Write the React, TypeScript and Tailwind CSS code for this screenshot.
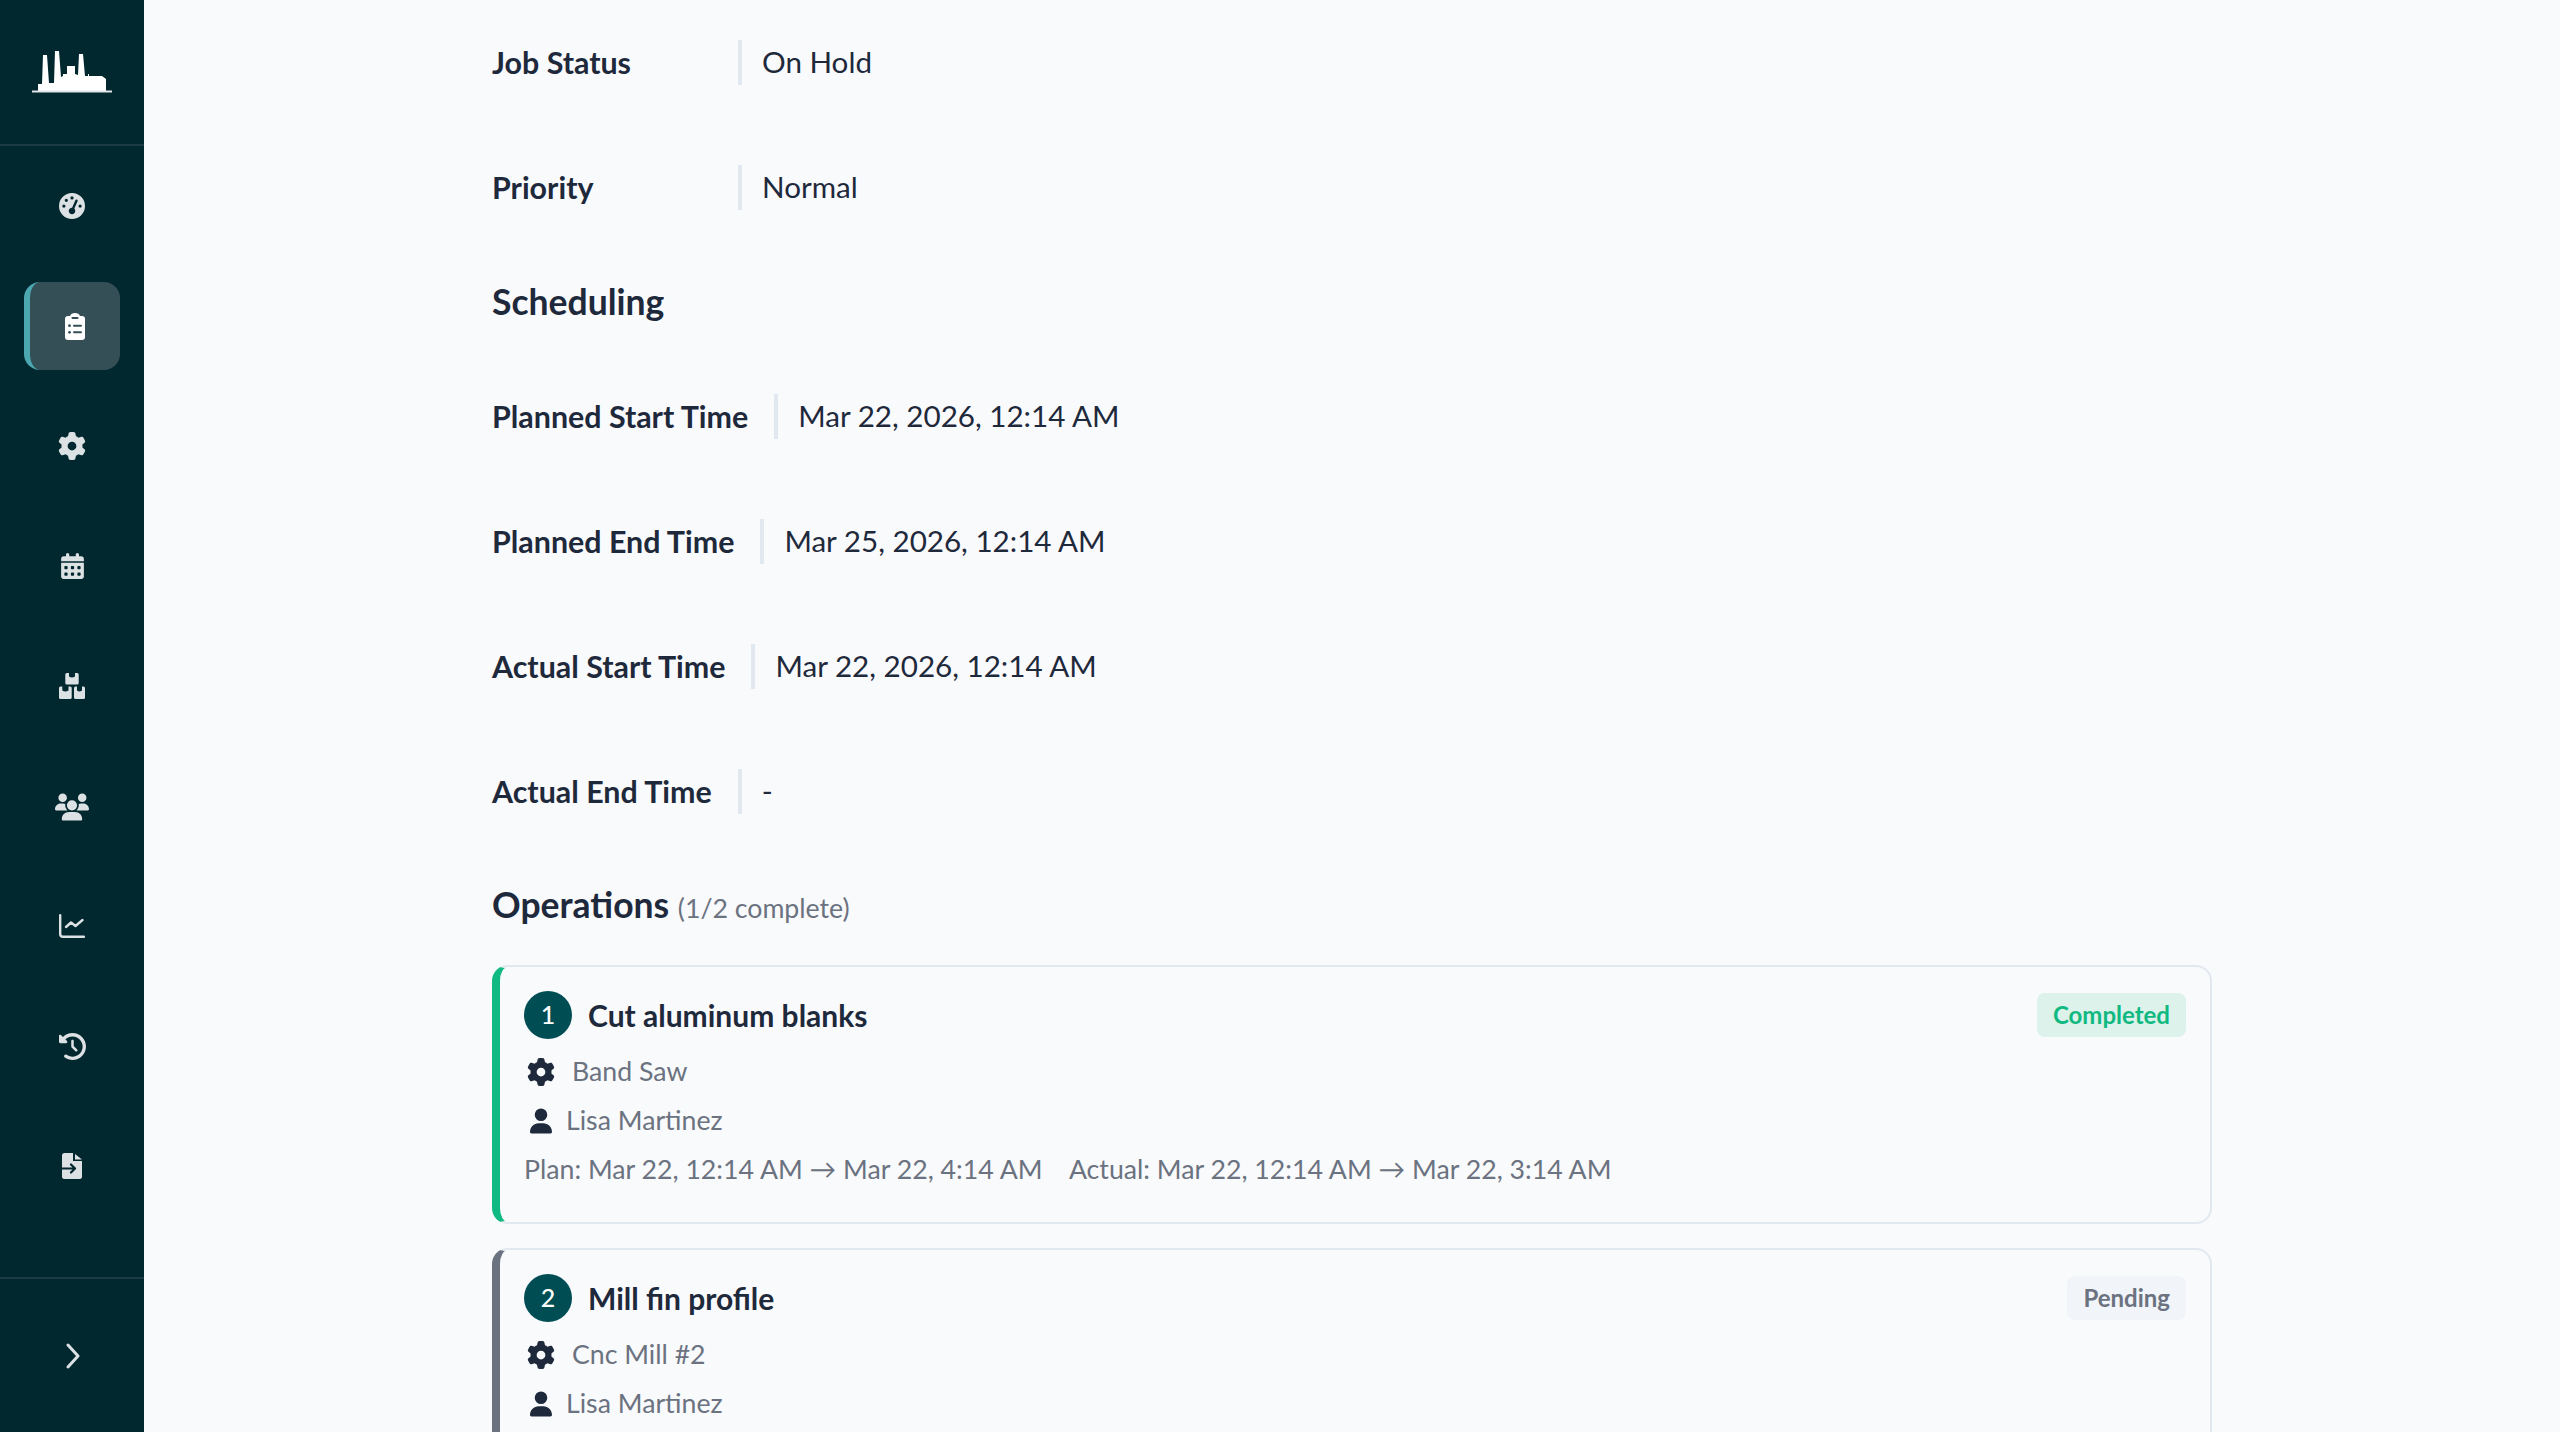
import type { ReactNode } from 'react';
import {
  FaCalendarDays,
  FaClockRotateLeft,
  FaGaugeHigh,
  FaGear,
  FaUser,
  FaUsers,
} from 'react-icons/fa6';

function Logo() {
  return (
    <svg viewBox="0 0 80 42" className="w-[80px] h-[42px]" fill="#ffffff">
      <path d="M6 40 L6 33 L10 33 L11 4 L15 4 L17 32 L22 32 L23 0 L27 0 L29 26 L31 25 L31 23 L35 23 L35 15 L43 15 L43 23 L46 24 L47 3 L51 3 L53 25 L56 25 L56 23 L57 23 L57 25 L70 25 L74 28 L74 40 Z" />
      <rect x="0" y="39.5" width="80" height="2" fill="#dfe5e6" />
    </svg>
  );
}

function ClipboardIcon() {
  return (
    <svg viewBox="0 0 20 27" className="w-[20px] h-[27px]">
      <path d="M3 3 H5 Q6 0 10 0 Q14 0 15 3 H17 A3 3 0 0 1 20 6 V24 A3 3 0 0 1 17 27 H3 A3 3 0 0 1 0 24 V6 A3 3 0 0 1 3 3 Z" fill="currentColor" />
      <rect x="6.5" y="4" width="7" height="2" rx="1" fill="#344f56" />
      <circle cx="4.5" cy="12.7" r="1.4" fill="#344f56" />
      <rect x="8" y="11.7" width="9" height="2" rx="1" fill="#344f56" />
      <circle cx="4.5" cy="19.3" r="1.4" fill="#344f56" />
      <rect x="8" y="18.3" width="9" height="2" rx="1" fill="#344f56" />
    </svg>
  );
}

// three boxes with a notch on top
function BoxesIcon() {
  return (
    <svg viewBox="0 0 26 26" className="w-[26px] h-[26px]" fill="currentColor">
      <path d="M7.8 0 A1.5 1.5 0 0 0 6.3 1.5 V10 A1.5 1.5 0 0 0 7.8 11.5 H18.2 A1.5 1.5 0 0 0 19.7 10 V1.5 A1.5 1.5 0 0 0 18.2 0 H16 V3.5 Q13 5.5 10 3.5 V0 Z" />
      <path d="M1.5 13.5 A1.5 1.5 0 0 0 0 15 V24.5 A1.5 1.5 0 0 0 1.5 26 H11.2 A1.5 1.5 0 0 0 12.7 24.5 V15 A1.5 1.5 0 0 0 11.2 13.5 H9.5 V17.5 Q6.4 19.5 3.3 17.5 V13.5 Z" />
      <path d="M16.5 13.5 A1.5 1.5 0 0 0 15 15 V24.5 A1.5 1.5 0 0 0 16.5 26 H24.5 A1.5 1.5 0 0 0 26 24.5 V15 A1.5 1.5 0 0 0 24.5 13.5 H23 V17.5 Q20.4 19.5 18 17.5 V13.5 Z" />
    </svg>
  );
}

function ChartIcon() {
  return (
    <svg viewBox="0 0 26 24" className="w-[26px] h-[24px]" fill="none" stroke="currentColor" strokeWidth="2.4" strokeLinecap="round" strokeLinejoin="round">
      <path d="M1.2 1.2 V20 A2.8 2.8 0 0 0 4 22.8 H25" />
      <path d="M7 13 L12 8.5 L16.5 12 L23.5 6" />
    </svg>
  );
}

function FileInIcon() {
  return (
    <svg viewBox="0 0 20 26" className="w-[20px] h-[26px]">
      <path d="M2.5 0 H11 V8 H20 V23.5 A2.5 2.5 0 0 1 17.5 26 H2.5 A2.5 2.5 0 0 1 0 23.5 V2.5 A2.5 2.5 0 0 1 2.5 0 Z" fill="currentColor" />
      <path d="M13 1 L20 6.5 H13 Z" fill="currentColor" />
      <path d="M0 15.5 H12.5 M9 11.5 L13 15.5 L9 19.5" fill="none" stroke="#01272f" strokeWidth="2.2" strokeLinecap="round" strokeLinejoin="round" />
    </svg>
  );
}

function ChevronIcon() {
  return (
    <svg viewBox="0 0 14 26" className="w-[14px] h-[26px] ml-[2px]" fill="none" stroke="currentColor" strokeWidth="3" strokeLinecap="round" strokeLinejoin="round">
      <path d="M2 2 L12 13 L2 24" />
    </svg>
  );
}

function NavItem({ icon, active }: { icon: ReactNode; active?: boolean }) {
  if (active) {
    return (
      <div className="h-[120px] flex items-center justify-center">
        <div className="w-[96px] h-[88px] rounded-[16px] bg-[#344f56] border-l-[6px] border-[#4ba8b0] flex items-center justify-center text-white">
          {icon}
        </div>
      </div>
    );
  }
  return <div className="h-[120px] flex items-center justify-center text-[#dce1e3]">{icon}</div>;
}

function Sidebar() {
  return (
    <aside className="w-[144px] h-full shrink-0 bg-[#01272f] flex flex-col">
      <div className="h-[146px] shrink-0 flex items-center justify-center border-b-2 border-[#1b3c44]">
        <Logo />
      </div>
      <nav className="flex-1 flex flex-col">
        <NavItem icon={<FaGaugeHigh className="w-[26px] h-[26px]" />} />
        <NavItem active icon={<ClipboardIcon />} />
        <NavItem icon={<FaGear className="w-[28px] h-[28px]" />} />
        <NavItem icon={<FaCalendarDays className="w-[23px] h-[26px]" />} />
        <NavItem icon={<BoxesIcon />} />
        <NavItem icon={<FaUsers className="w-[34px] h-[28px] mt-[2px]" />} />
        <NavItem icon={<ChartIcon />} />
        <NavItem icon={<FaClockRotateLeft className="w-[27px] h-[27px]" />} />
        <NavItem icon={<FileInIcon />} />
      </nav>
      <div className="h-[155px] shrink-0 flex items-center justify-center border-t-2 border-[#1b3c44] text-[#dce1e3]">
        <ChevronIcon />
      </div>
    </aside>
  );
}

function Field({ label, value, wide }: { label: string; value: string; wide?: boolean }) {
  return (
    <div className="flex items-center h-[45px] mb-[80px]">
      <div className={`font-bold text-[30.4px] text-[#1e293b] pr-[26px] ${wide ? '' : 'min-w-[246px]'}`}>{label}</div>
      <div className="w-[4px] h-[45px] bg-[#e2e8f0]" />
      <div className="pl-[20px] text-[29.6px] text-[#1e293b]">{value}</div>
    </div>
  );
}

function Operation({
  num,
  title,
  machine,
  person,
  times,
  status,
  done,
}: {
  num: number;
  title: string;
  machine: string;
  person: string;
  times?: string;
  status: string;
  done?: boolean;
}) {
  return (
    <div
      className={`w-[1720px] shrink-0 rounded-[16px] border-2 border-[#e2e8f0] border-l-[8px] pt-[24px] pl-[24px] pr-[24px] h-[259px] mb-[24px] ${
        done ? 'border-l-[#10b981]' : 'border-l-[#6b7280]'
      }`}
    >
      <div className="flex items-center justify-between h-[48px]">
        <div className="flex items-center gap-[16px]">
          <div className="w-[48px] h-[48px] rounded-full bg-[#004d54] text-white flex items-center justify-center text-[25px] font-medium">
            {num}
          </div>
          <div className="text-[30px] font-bold text-[#1e293b]">{title}</div>
        </div>
        <div
          className={`h-[44px] px-[16px] rounded-[8px] flex items-center text-[24px] font-bold ${
            done ? 'bg-[#dcf2eb] text-[#10b981]' : 'bg-[#f1f4f9] text-[#6b7280]'
          }`}
        >
          {status}
        </div>
      </div>
      <div className="flex items-center h-[49px] mt-[8px] text-[#6b7280] text-[26.7px]">
        <FaGear className="w-[28px] h-[30px] ml-[3px] mr-[17px] text-[#1e293b]" />
        {machine}
      </div>
      <div className="flex items-center h-[49px] text-[#6b7280] text-[26.7px]">
        <FaUser className="w-[22px] h-[26px] ml-[6px] mr-[14px] text-[#1e293b]" />
        {person}
      </div>
      {times && <div className="flex items-center h-[49px] text-[#6b7280] text-[26.7px] whitespace-pre">{times}</div>}
    </div>
  );
}

export default function App() {
  return (
    <div className="flex h-screen overflow-hidden bg-[#f9fafc] font-['Lato',sans-serif]">
      <Sidebar />
      <main className="flex-1 pl-[348px] pt-[40px] overflow-hidden">
        <Field label="Job Status" value="On Hold" />
        <Field label="Priority" value="Normal" />
        <h2 className="text-[35.5px] font-bold text-[#1e293b] h-[50px] leading-[50px] mt-[-13px] mb-[67px]">Scheduling</h2>
        <Field wide label="Planned Start Time" value="Mar 22, 2026, 12:14 AM" />
        <Field wide label="Planned End Time" value="Mar 25, 2026, 12:14 AM" />
        <Field wide label="Actual Start Time" value="Mar 22, 2026, 12:14 AM" />
        <Field wide label="Actual End Time" value="-" />
        <h2 className="text-[35.5px] font-bold text-[#1e293b] h-[50px] leading-[50px] mt-[-14px] mb-[35px]">
          Operations <span className="text-[26.7px] font-normal text-[#6b7280]">(1/2 complete)</span>
        </h2>
        <Operation
          done
          num={1}
          title="Cut aluminum blanks"
          machine="Band Saw"
          person="Lisa Martinez"
          times={'Plan: Mar 22, 12:14 AM → Mar 22, 4:14 AM    Actual: Mar 22, 12:14 AM → Mar 22, 3:14 AM'}
          status="Completed"
        />
        <Operation num={2} title="Mill fin profile" machine="Cnc Mill #2" person="Lisa Martinez" status="Pending" />
      </main>
    </div>
  );
}
